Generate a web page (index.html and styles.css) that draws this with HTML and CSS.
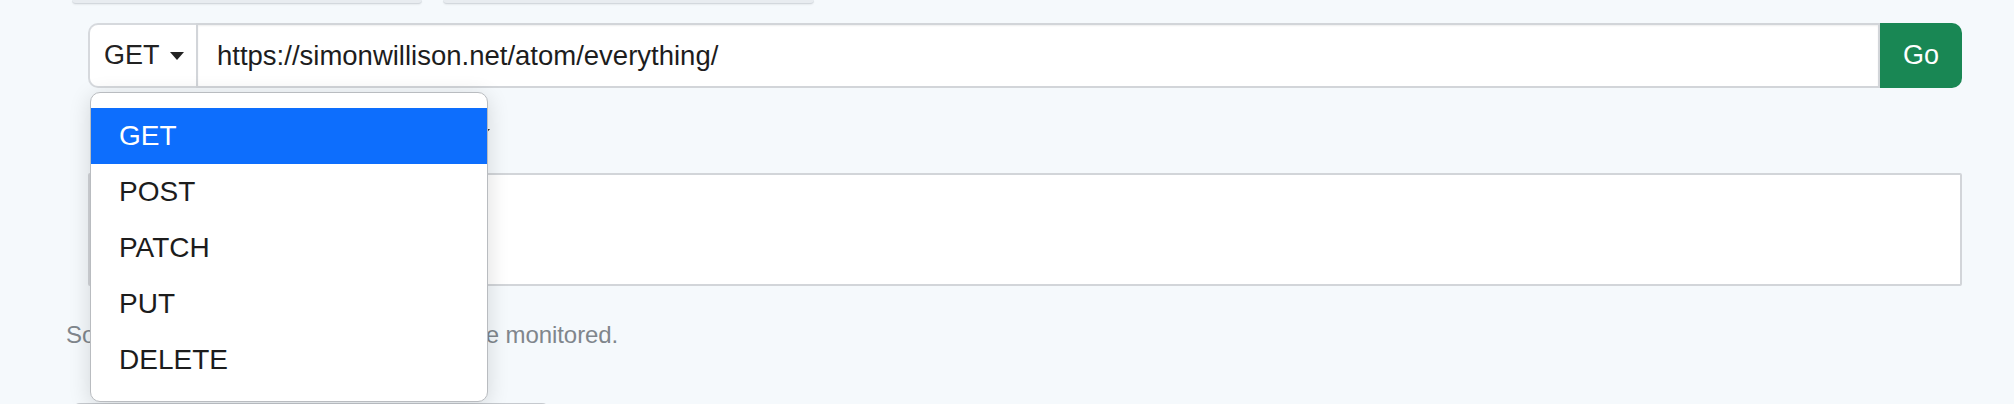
FILE: index.html
```html
<!DOCTYPE html>
<html lang="en">
<head>
<meta charset="utf-8">
<title>Monitor URL</title>
<link rel="stylesheet" href="styles.css">
</head>
<body>
<div class="page">
  <div class="tabs">
    <div class="tab tab-a"></div>
    <div class="tab tab-b"></div>
  </div>

  <div class="igroup">
    <div class="method">
      <span>GET</span>
      <svg class="caret" width="14" height="8" viewBox="0 0 14 8"><path d="M0 0h14L7 8z" fill="#222"/></svg>
    </div>
    <div class="url">https://simonwillison.net/atom/everything/</div>
    <div class="go">Go</div>
  </div>

  <div class="selrow">
    <svg class="caret" width="14" height="8" viewBox="0 0 14 8"><path d="M0 0h14L7 8z" fill="#333"/></svg>
  </div>

  <div class="body-box"></div>

  <p class="help">Some sites that require a login cannot be monitored.</p>

  <div class="bottom-card"></div>

  <ul class="menu">
    <li class="item active">GET</li>
    <li class="item">POST</li>
    <li class="item">PATCH</li>
    <li class="item">PUT</li>
    <li class="item">DELETE</li>
  </ul>
</div>
</body>
</html>
```

FILE: styles.css
```css
* { box-sizing: border-box; }
html, body {
  margin: 0;
  padding: 0;
  background: #f5f9fc;
  font-family: "Liberation Sans", Arial, sans-serif;
  color: #212529;
}
.page {
  position: relative;
  width: 2014px;
  height: 404px;
  overflow: hidden;
}
.tabs {
  display: flex;
  gap: 21px;
  padding-left: 72px;
  height: 4px;
}
.tab {
  height: 4px;
  background: #e8ecf0;
  border-bottom: 1px solid #d3d8dd;
  border-radius: 0 0 6px 6px;
  box-shadow: 0 1px 2px rgba(0,0,0,0.06);
}
.tab-a { width: 350px; }
.tab-b { width: 371px; }

.igroup {
  display: flex;
  height: 65px;
  margin: 19px 52px 0 88px;
  font-size: 27px;
}
.method {
  width: 108px;
  display: flex;
  align-items: center;
  gap: 10px;
  padding-left: 14px;
  background: #fff;
  border: 2px solid #d6d9dd;
  border-right: none;
  border-radius: 10px 0 0 10px;
  color: #222;
}
.url {
  flex: 1;
  display: flex;
  align-items: center;
  padding-left: 19px;
  font-size: 27.5px;
  background: #fff;
  border: 2px solid #d2d5d9;
  box-shadow: inset 0 1px 2px rgba(0,0,0,0.07);
  color: #1d1d1d;
}
.go {
  width: 82px;
  display: flex;
  align-items: center;
  justify-content: center;
  background: #198754;
  color: #fff;
  border-radius: 0 10px 10px 0;
}

.selrow {
  display: flex;
  align-items: center;
  justify-content: flex-end;
  width: 402px;
  height: 48px;
  margin: 21px 0 0 88px;
}

.body-box {
  height: 113px;
  margin: 16px 52px 0 88px;
  background: #fff;
  border: 2px solid #d2d5d9;
  border-radius: 2px;
}

.help {
  margin: 31px 0 0 66px;
  font-size: 24px;
  line-height: 36px;
  letter-spacing: -0.08px;
  color: #80868c;
}

.bottom-card {
  width: 478px;
  height: 40px;
  margin: 50px 0 0 72px;
  background: #e9ecef;
  border-top: 1px solid #c6cacf;
  border-radius: 8px;
}

.menu {
  position: absolute;
  left: 90px;
  top: 92px;
  width: 398px;
  height: 310px;
  margin: 0;
  padding: 15px 0;
  list-style: none;
  background: #fff;
  border: 1px solid #b9bcc0;
  border-radius: 10px;
  box-shadow: 0 4px 22px rgba(0,0,0,0.14);
  z-index: 5;
}
.item {
  height: 56px;
  line-height: 56px;
  padding-left: 28px;
  font-size: 28px;
  color: #1c1c1c;
}
.item.active {
  background: #0d6efd;
  color: #fff;
}
```
